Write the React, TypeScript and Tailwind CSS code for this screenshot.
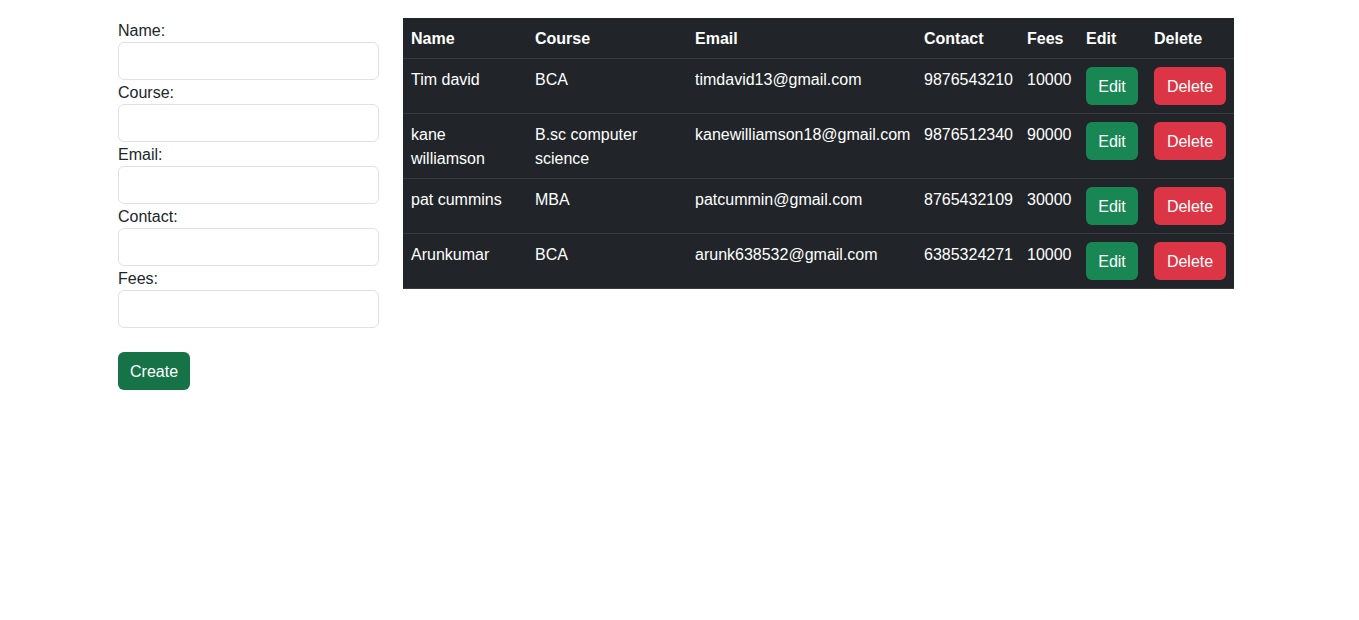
import { useState } from "react";

type Student = {
  name: string;
  course: string;
  email: string;
  contact: string;
  fees: string;
};

const initialStudents: Student[] = [
  { name: "Tim david", course: "BCA", email: "timdavid13@gmail.com", contact: "9876543210", fees: "10000" },
  { name: "kane williamson", course: "B.sc computer science", email: "kanewilliamson18@gmail.com", contact: "9876512340", fees: "90000" },
  { name: "pat cummins", course: "MBA", email: "patcummin@gmail.com", contact: "8765432109", fees: "30000" },
  { name: "Arunkumar", course: "BCA", email: "arunk638532@gmail.com", contact: "6385324271", fees: "10000" },
];

const fields = ["Name", "Course", "Email", "Contact", "Fees"];

function StudentForm() {
  return (
    <form className="w-[261px] shrink-0" onSubmit={(e) => e.preventDefault()}>
      {fields.map((f) => (
        <div key={f} className="flex flex-col">
          <label className="h-6 pt-px leading-[23px] text-[#212529]">{f}:</label>
          <input
            type="text"
            className="h-[38px] w-full rounded-md border border-[#dee2e6] bg-white px-3 outline-none"
          />
        </div>
      ))}
      <button
        type="submit"
        className="mt-6 h-[38px] rounded-md bg-[#157347] px-3 pt-px leading-6 text-white"
      >
        Create
      </button>
    </form>
  );
}

function StudentTable({ students }: { students: Student[] }) {
  return (
    <table className="w-[831px] table-fixed border-collapse bg-[#212529] text-white">
      <colgroup>
        <col className="w-[124px]" />
        <col className="w-[160px]" />
        <col className="w-[229px]" />
        <col className="w-[103px]" />
        <col className="w-[59px]" />
        <col className="w-[68px]" />
        <col className="w-[88px]" />
      </colgroup>
      <thead>
        <tr className="border-b border-[#373b3e] text-left">
          {["Name", "Course", "Email", "Contact", "Fees", "Edit", "Delete"].map((h) => (
            <th key={h} className="px-2 pt-[9px] pb-[7px] font-bold leading-6">
              {h}
            </th>
          ))}
        </tr>
      </thead>
      <tbody>
        {students.map((s) => (
          <tr key={s.email} className="border-b border-[#373b3e] align-top">
            <td className="px-2 pt-[9px] pb-[7px] leading-6">{s.name}</td>
            <td className="px-2 pt-[9px] pb-[7px] leading-6">{s.course}</td>
            <td className="whitespace-nowrap px-2 pt-[9px] pb-[7px] leading-6">{s.email}</td>
            <td className="whitespace-nowrap px-2 pt-[9px] pb-[7px] leading-6">{s.contact}</td>
            <td className="px-2 pt-[9px] pb-[7px] leading-6">{s.fees}</td>
            <td className="p-2">
              <button className="h-[38px] w-[52px] rounded-md bg-[#198754] pt-px leading-6 text-white">Edit</button>
            </td>
            <td className="p-2">
              <button className="h-[38px] w-[72px] rounded-md bg-[#dc3545] pt-px leading-6 text-white">Delete</button>
            </td>
          </tr>
        ))}
      </tbody>
    </table>
  );
}

export default function App() {
  const [students] = useState<Student[]>(initialStudents);

  return (
    <div className="min-h-screen bg-white font-['Liberation_Sans',Arial,sans-serif] text-base text-[#212529]">
      <div className="ml-[118px] flex gap-6 pt-[18px]">
        <StudentForm />
        <div>
          <StudentTable students={students} />
        </div>
      </div>
    </div>
  );
}
